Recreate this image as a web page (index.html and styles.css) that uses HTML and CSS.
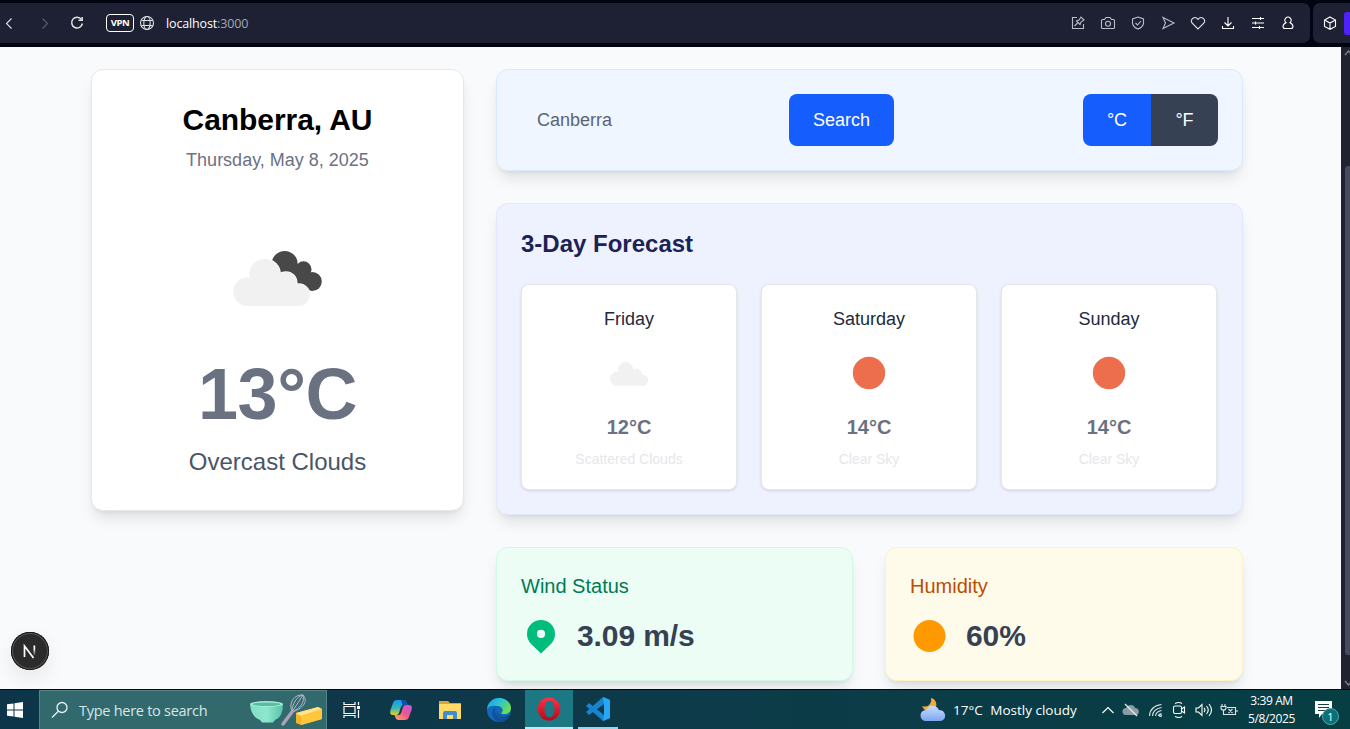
FILE: index.html
```html
<!DOCTYPE html>
<html lang="en">
<head>
<meta charset="utf-8">
<title>Weather</title>
<link rel="stylesheet" href="styles.css">
</head>
<body>
<div class="screen">
  <header class="browser">
    <div class="toolbar">
      <div class="nav">
        <svg width="16" height="16" class="stroke"><path d="M10.500 3.500 5.500 8.500l5 5"/></svg>
        <svg width="16" height="16" class="stroke dim"><path d="M5.500 3.500 10.500 8.500l-5 5"/></svg>
        <svg width="16" height="16" class="stroke reload"><path d="M12.500 4.500A5.400 5.400 0 1 0 13.400 8.500"/><path d="M13.200 2v3.200H9.500"/></svg>
      </div>
      <span class="vpn">VPN</span>
      <svg width="16" height="16" class="stroke globe"><circle cx="8" cy="8" r="6.500"/><ellipse cx="8" cy="8" rx="3.200" ry="6.500"/><path d="M2.500 5.500h11M2.500 10.500h11"/></svg>
      <span class="url"><b>localhost</b>:3000</span>
      <div class="tools">
        <svg width="16" height="16" class="stroke soft"><path d="M7 2.500H2.500v11h11V9M4.500 11l3-3M6.500 6l3.500 3.500 1-2.500 3-2-3-3-2 3z"/></svg>
        <svg width="16" height="16" class="stroke soft"><path d="M2.500 4.500h2l1.500-2h4l1.500 2h2q1 0 1 1v7q0 1-1 1h-11q-1 0-1-1v-7q0-1 1-1z"/><circle cx="8" cy="8.700" r="2.500"/></svg>
        <svg width="16" height="16" class="stroke soft"><path d="M8 2 13.500 4v4.500Q12.500 12.500 8 14 3.500 12.500 2.500 8.500V4zM5.500 8l2 2 3.500-4"/></svg>
        <svg width="16" height="16" class="stroke soft"><path d="M3 2.500 14 8 3 13.500 5.500 8z"/></svg>
        <svg width="16" height="16" class="stroke"><path d="M8 14 2 8C-.2 4 4.800 .400 8 4.300 11.200 .400 16.200 4 14 8z"/></svg>
        <svg width="16" height="16" class="stroke bright"><path d="M8 2v8.500M4.500 7.500 8 11l3.500-3.500M2.500 11v2.500h11V11"/></svg>
        <svg width="16" height="16" class="stroke bright"><path d="M2 3.500h12M2 8h12M2 12.500h12M10.500 2v3M5.500 6.500v3M9.500 11v3"/></svg>
        <svg width="16" height="16" class="stroke bright"><path d="M6 7.700a3.200 3.200 0 1 1 4 0Q13 9 13 11.500q0 2-2 2H5q-2 0-2-2Q3 9 6 7.700z"/></svg>
      </div>
    </div>
    <div class="side-tools">
      <svg width="16" height="16" class="stroke bright"><path d="M8 2 13.500 5v6.500L8 14.300 2.500 11.500V5zM2.500 5 8 8l5.500-3M8 8v6"/></svg>
      <i class="accent"></i>
    </div>
  </header>

  <div class="viewport">
    <main class="page">
      <section class="card current">
        <h1 class="city">Canberra, AU</h1>
        <p class="date">Thursday, May 8, 2025</p>
        <svg class="current-icon" width="100" height="64" viewBox="0 0 100 64">
          <defs><g id="cloud"><circle cx="19.500" cy="44.800" r="14.200"/><circle cx="36.700" cy="27.500" r="15.500"/><circle cx="58" cy="35.700" r="10.700"/><circle cx="70.700" cy="48" r="11"/><path d="M19.500 35 36 30 58 32 70.700 45V59H19.500z"/></g></defs>
          <g fill="#484848"><circle cx="56.700" cy="17" r="13"/><circle cx="75.500" cy="22.300" r="8"/><circle cx="84.300" cy="34.500" r="9.500"/><path d="M56 30 68 16 80 28 84 44 64 34z"/></g>
          <use href="#cloud" class="cloud-gap"/>
          <use href="#cloud" class="cloud"/>
        </svg>
        <p class="temp">13°C</p>
        <p class="summary">Overcast Clouds</p>
      </section>

      <div class="details">
        <section class="card search">
          <span class="query">Canberra</span>
          <button class="search-button">Search</button>
          <div class="units"><button class="unit active">°C</button><button class="unit">°F</button></div>
        </section>

        <section class="card forecast">
          <h2 class="forecast-title">3-Day Forecast</h2>
          <div class="days">
            <article class="day">
              <h3>Friday</h3>
              <svg width="50" height="50"><use href="#cloud" class="cloud" transform="translate(3.400 8.300) scale(.5)"/></svg>
              <strong>12°C</strong><p>Scattered Clouds</p>
            </article>
            <article class="day">
              <h3>Saturday</h3>
              <svg width="50" height="50"><circle class="sun" cx="25" cy="25" r="16.200"/></svg>
              <strong>14°C</strong><p>Clear Sky</p>
            </article>
            <article class="day">
              <h3>Sunday</h3>
              <svg width="50" height="50"><circle class="sun" cx="25" cy="25" r="16.200"/></svg>
              <strong>14°C</strong><p>Clear Sky</p>
            </article>
          </div>
        </section>

        <div class="stats">
          <section class="card stat wind">
            <h3>Wind Status</h3>
            <div class="reading"><svg width="40" height="40" viewBox="0 0 40 40"><path fill="#00bc7d" fill-rule="evenodd" d="M10.100 27.900a14 14 0 1 1 19.800 0L20 37.500zM20 22a4.100 4.100 0 1 0 0-8.200A4.100 4.100 0 0 0 20 22z"/></svg><strong>3.09 m/s</strong></div>
          </section>
          <section class="card stat humidity">
            <h3>Humidity</h3>
            <div class="reading"><svg width="40" height="40"><circle cx="19.500" cy="20" r="16" fill="#fe9a00"/></svg><strong>60%</strong></div>
          </section>
        </div>
      </div>
    </main>
    <div class="scrollbar"><svg width="9" height="12"><path d="M4 8 7.500 4 11 8" class="arrow"/></svg><i></i><svg width="9" height="12"><path d="M4 4 7.500 8 11 4" class="arrow"/></svg></div>
    <div class="dev-badge"><svg width="38" height="38"><defs><linearGradient id="fade" x1="0" y1="0" x2="0" y2="1"><stop offset=".3" stop-color="#fff"/><stop offset="1" stop-color="#fff" stop-opacity="0"/></linearGradient></defs><path d="M13.500 25V14l9 12" fill="none" stroke="#fff" stroke-width="1.700"/><rect x="22.500" y="13.500" width="1.700" height="10.500" fill="url(#fade)"/></svg></div>
  </div>

  <footer class="taskbar">
    <div class="start"><svg width="16" height="16"><path fill="#fff" d="M0 2.300 6.500 1.400V7.500H0zM7.500 1.200 16 0V7.500H7.500zM0 8.500H6.500V14.600L0 13.700zM7.500 8.500H16V16L7.500 14.800z"/></svg></div>
    <div class="task-search">
      <svg width="18" height="18"><g fill="none" stroke="#e8f2f2" stroke-width="1.300"><circle cx="11" cy="6.500" r="5"/><path d="M7.300 10.200 1 16.500"/></g></svg>
      <span>Type here to search</span>
      <svg class="baking" width="74" height="36" viewBox="0 0 74 36">
        <defs><linearGradient id="mint" x1="0" x2="1"><stop stop-color="#82dec4"/><stop offset=".5" stop-color="#8ce8cd"/><stop offset="1" stop-color="#5bc3a8"/></linearGradient></defs>
        <path fill="url(#mint)" d="M1 12Q2 25 11 28l2 2.500h11l2-2.500q8-3 8-16z"/><ellipse cx="17.500" cy="12" rx="16.500" ry="3" fill="#a5eed9"/><ellipse cx="17.500" cy="12.300" rx="14" ry="1.800" fill="#58bda3"/>
        <g fill="none" stroke="#b9b4c8" stroke-width="1"><path d="M43 20C39 10 46 2 54 3 60 10 53 17 43 20zM43 20C43 12 48 4 54 3M43 20C51 16 56 11 54 3M43 20 54 3"/></g><path d="M43 20 34 32" stroke="#aaa1ba" stroke-width="3.500" stroke-linecap="round"/>
        <path d="M47 21 69 15 73 17V27L52 33 47 31z" fill="#f4b52c"/><path d="M47 21 69 15 73 17 52 24z" fill="#ffe28a"/><path d="M52 24 73 17V27L52 33z" fill="#ffc83b"/>
      </svg>
    </div>
    <div class="app"><svg width="18" height="18"><path fill="none" stroke="#fff" stroke-width="1.200" d="M1 1v2.500h11V1M1 5.500h11v7H1zM1 17v-2.500h11V17M15.500 1v3M15.500 9v8"/><path fill="#fff" d="M14 5h3v3h-3z"/></svg></div>
    <div class="app"><svg width="24" height="24" viewBox="0 0 24 24"><defs><linearGradient id="cool" x1="0" y1="0" x2="0" y2="1"><stop stop-color="#1799ee"/><stop offset=".55" stop-color="#35b9b4"/><stop offset="1" stop-color="#f1cc23"/></linearGradient><linearGradient id="warm" x1="1" y1="0" x2="0" y2="1"><stop stop-color="#b65ce0"/><stop offset=".5" stop-color="#f0568b"/><stop offset="1" stop-color="#ffae61"/></linearGradient></defs><path fill="url(#cool)" d="M8 2h7q2 0 2.800 3l.7 2h-4q-2 0-2.600 2L10 15q-.7 2-3 2H4Q0 17 1.500 12L4 5Q5 2 8 2z"/><path fill="#174ab0" d="M12 2h3q2 0 2.800 3l.7 2h-5z"/><path fill="url(#warm)" d="M16 22H9q-2 0-2.800-3l-.7-2h4q2 0 2.600-2L14 9q.7-2 3-2h3q4 0 2.500 5L20 19q-1 3-4 3z"/></svg></div>
    <div class="app"><svg width="22" height="20"><path fill="#e0a42c" d="M0 1h9l2 2h11v4H0z"/><path fill="#ffda69" d="M0 4h22v15H0z"/><path fill="#3e8ed0" d="M4 19v-6q0-2 2-2h10q2 0 2 2v6h-4v-4H8v4z"/></svg></div>
    <div class="app"><svg width="24" height="24"><defs><linearGradient id="wave" x1="0" y1="0" x2="1" y2=".5"><stop stop-color="#2198e6"/><stop offset=".5" stop-color="#2bc1d6"/><stop offset="1" stop-color="#68df55"/></linearGradient></defs><circle cx="12" cy="12" r="12" fill="#1269b9"/><path fill="url(#wave)" d="M0 11C1 4 6 0 12 0c7 0 12 5 12 10 0 4-3 6-7 6-3 0-3-1-2-2 2-3-1-6-5-6-4-1-8 0-10 3z"/><path fill="#0d52a0" d="M9 9c-3 5 1 11 7 11 3 0 5-1 6-2-2 4-6 6-10 6C5 23 3 12 9 9z"/><path fill="#113c64" d="M10 11c-1 4 3 8 8 8l4-2-1 2c-5 2-13-1-11-8z"/></svg></div>
    <div class="app opera"><svg width="24" height="24"><defs><linearGradient id="red" x1="0" y1="0" x2="0" y2="1"><stop stop-color="#ff3048"/><stop offset="1" stop-color="#b30b1c"/></linearGradient></defs><path fill="url(#red)" fill-rule="evenodd" d="M12 .5a11.300 11.500 0 1 0 0 23 11.300 11.500 0 1 0 0-23zM12.500 3.500c3 0 5 4 5 8.500s-2 8.500-5 8.500S7.500 16.500 7.500 12s2-8.500 5-8.500z"/></svg></div>
    <div class="app code"><svg width="24" height="24"><path fill="#1684ce" d="M17 0 24 3V21L17 24 0 9 3 6 18 18V7L3 18 0 15z"/><path fill="#2aa6f2" d="M17 0 24 3V21L17 24l1-6V7z"/></svg></div>
    <div class="tray">
      <svg width="26" height="26" viewBox="0 0 26 26"><defs><linearGradient id="sky" x1="0" y1="0" x2="0" y2="1"><stop stop-color="#c9ddff"/><stop offset="1" stop-color="#7ca7f2"/></linearGradient></defs><path fill="#f3a83b" d="M11 1c5 1 7 7 4 11-4 4-11 3-13-3C8 11 12 7 11 1z"/><path fill="url(#sky)" d="M6 24a5.500 5.500 0 0 1 0-11c2-5 10-6 13 0 8 0 8 11 1 11z"/></svg>
      <span class="weather">17°C <span>Mostly cloudy</span></span>
      <div class="tray-icons">
        <svg width="14" height="16" class="stroke bright"><path d="M1.500 11 7 5.500l5.500 5.500"/></svg>
        <svg width="18" height="16"><path fill="#8b9ca5" d="M4 13a3.500 3.500 0 0 1 0-7c2-4 8-4 9 0 5 0 5 7 1 7z"/><path d="M3 2 15 14" stroke="#e8eef0" stroke-width="1.300"/></svg>
        <svg width="16" height="16" class="stroke"><path d="M1.500 14Q2 4 13.500 2.500M4.500 14Q5 7 13.500 5.500M7.500 14Q8 9.500 13.500 8.500M10.500 14q0-2 3-2.500"/><circle cx="12.500" cy="13.500" r="1"/></svg>
        <svg width="16" height="18" class="stroke bright"><rect x="2.500" y="5" width="8" height="7.500" rx="1.500"/><path d="m10.500 8 3-2v6l-3-2M4 2.500Q8 .500 11 2.500M4 15.500Q8 17.500 11 15.500"/></svg>
        <svg width="18" height="16" class="stroke bright"><path d="M1 6h2.500L7 2.500v11L3.500 10H1zM9 6q2 2 0 4M11.500 4q3.500 4 0 8M14 2q5 6 0 12"/></svg>
        <svg width="18" height="16" class="stroke soft-white"><path d="M2 2v2M5 2v2M1 4.500h5V6Q6 8 3.500 8 1 8 1 6zM3.500 8v4.500H15.500v-7H7M8.500 7l4 4M12.500 7l-4 4M17 8v2"/></svg>
      </div>
      <div class="clock"><span>3:39 AM</span><span>5/8/2025</span></div>
      <div class="notice"><svg width="17" height="17"><path fill="#fff" d="M0 0h17v13H7l-3 4v-4H0z"/><path stroke="#173e4b" d="M3 3.500h11M3 6.500h11M3 9.500h7"/></svg><b>1</b></div>
    </div>
  </footer>
</div>
</body>
</html>
```
FILE: styles.css
```css
* { box-sizing: border-box; }
body { margin: 0; font-family: "Liberation Sans", Arial, sans-serif; }
h1, h2, h3, p { margin: 0; }
h3 { font-weight: 400; }
button { border: 0; font: inherit; padding: 0; }
svg { display: block; flex: none; }
.screen { width: 1350px; height: 729px; display: flex; flex-direction: column; overflow: hidden; }

.stroke { fill: none; stroke: #dfe1e8; stroke-width: 1.1; }
.dim { stroke: #5b5e6c; }
.soft { stroke: #b9bcc8; }
.bright { stroke: #fff; }
.soft-white { stroke: #dde5e8; }
.browser { height: 47px; flex: none; background: #020412; padding: 3px 0 4px; display: flex; gap: 3px; font-family: "Open Sans", "Noto Sans", sans-serif; }
.toolbar { width: 1310px; background: #1e2133; border-radius: 0 7px 7px 0; display: flex; align-items: center; padding: 0 14px 0 1px; }
.nav { display: flex; gap: 20px; width: 105px; }
.nav .reload { margin-left: -4px; }
.reload { stroke-width: 1.5; }
.vpn { width: 28px; height: 18px; border: 1.5px solid #fff; border-radius: 4px; color: #fff; font-size: 9.5px; font-weight: 700; line-height: 16px; text-align: center; letter-spacing: -.5px; }
.globe { margin-left: 5px; }
.url { margin-left: 11px; color: #a3a7b6; font-size: 12.5px; letter-spacing: -.15px; }
.url b { font-weight: 400; color: #fff; }
.tools { margin-left: auto; display: flex; gap: 14px; }
.side-tools { flex: 1; background: #1e2133; border-radius: 7px 0 0 7px; display: flex; align-items: center; padding-left: 9px; gap: 6px; }
.accent { width: 6px; height: 23px; background: #4d22ff; border-radius: 3px 0 0 3px; }

.viewport { height: 642px; flex: none; background: #f9fafb; display: flex; position: relative; overflow: hidden; }
.page { width: 1341px; padding: 22px 98px 0 91px; display: flex; gap: 32px; align-items: flex-start; }
.card { border: 1px solid #e5e7eb; border-radius: 12px; box-shadow: 0 10px 15px -3px rgba(0,0,0,.1), 0 4px 6px -4px rgba(0,0,0,.1); }
.current { width: 373px; height: 442px; flex: none; background: #fff; display: flex; flex-direction: column; align-items: center; padding-top: 32px; }
.city { font-size: 30px; line-height: 36px; font-weight: 700; letter-spacing: -.07px; }
.date { margin-top: 8px; font-size: 18px; line-height: 28px; color: #6a7282; }
.current-icon { margin-top: 73px; }
.cloud { fill: #f1f1f1; }
.cloud-gap { fill: #fff; stroke: #fff; stroke-width: 1.6; }
.sun { fill: #ec6e4c; }
.temp { margin-top: 47px; font-size: 72px; line-height: 72px; font-weight: 700; color: #6a7282; letter-spacing: -.5px; }
.summary { margin-top: 16px; font-size: 24px; line-height: 32px; color: #4a5565; }

.details { width: 747px; flex: none; display: flex; flex-direction: column; gap: 32px; }
.search { height: 102px; padding: 24px; background: #eff6ff; border-color: #dbeafe; display: flex; align-items: center; font-size: 18px; }
.query { width: 268px; padding-left: 16px; color: #5b6472; }
.search-button { width: 105px; height: 52px; border-radius: 8px; background: #155dfc; color: #fff; }
.units { margin-left: auto; display: flex; border-radius: 8px; overflow: hidden; }
.unit { width: 67px; height: 52px; background: #364153; color: #fff; }
.unit.active { width: 68px; background: #155dfc; }
.forecast { height: 312px; padding: 24px; background: #eef2ff; border-color: #e0e7ff; }
.forecast-title { font-size: 24px; line-height: 32px; color: #1c2253; }
.days { margin-top: 24px; display: grid; grid-template-columns: repeat(3, 216px); gap: 24px; }
.day { height: 206px; background: #fff; border: 1px solid #e5e7eb; border-radius: 8px; box-shadow: 0 1px 3px rgba(0,0,0,.12); display: flex; flex-direction: column; align-items: center; padding-top: 20px; }
.day h3 { font-size: 18px; line-height: 28px; color: #1e2939; }
.day svg { margin-top: 15px; }
.day strong { margin-top: 15px; font-size: 20px; line-height: 28px; color: #6a7282; }
.day p { margin-top: 8px; font-size: 14px; line-height: 20px; color: #e5e7eb; }
.stats { display: grid; grid-template-columns: 357px 358px; gap: 32px; }
.stat { height: 134px; padding: 24px; }
.stat h3 { font-size: 20px; line-height: 28px; }
.wind { background: #ecfdf5; border-color: #d0fae5; }
.wind h3 { color: #007a55; }
.humidity { background: #fffbeb; border-color: #fef3c6; }
.humidity h3 { color: #bb4d00; }
.reading { margin-top: 16px; display: flex; align-items: center; gap: 16px; height: 40px; }
.reading strong { font-size: 30px; line-height: 36px; color: #364153; letter-spacing: -.1px; }
.scrollbar { width: 9px; background: #20222f; display: flex; flex-direction: column; overflow: hidden; }
.scrollbar i { margin: 107px 0 auto 4px; width: 8px; height: 489px; background: #474a5c; border-radius: 3px; }
.arrow { fill: none; stroke: #777985; stroke-width: 1.5; }
.dev-badge { position: absolute; left: 11px; top: 585px; width: 38px; height: 38px; border-radius: 50%; background: #2b2b2b; box-shadow: inset 0 0 0 1px #151515, inset 0 0 0 2px #555, 0 8px 20px rgba(0,0,0,.08); }

.taskbar { height: 40px; flex: none; border-top: 1px solid #020810; background: linear-gradient(90deg, #0d3549, #0d3b49 55%, #063e43); display: flex; color: #fff; font-family: "Open Sans", "Noto Sans", sans-serif; }
.start { width: 39px; display: flex; align-items: center; padding-left: 7px; }
.task-search { width: 288px; background: #32696d; border: 1px solid #568589; border-bottom: 0; display: flex; align-items: center; padding: 0 3px 0 11px; color: #d7e6e8; font-size: 14.5px; }
.task-search span { margin-left: 10px; letter-spacing: -.27px; }
.baking { margin-left: auto; }
.app { width: 49px; display: flex; align-items: center; justify-content: center; }
.opera { width: 48px; margin-left: 2px; background: #1c7883; border-bottom: 2px solid #b8edf7; }
.code { width: 40px; margin-left: 5px; border-bottom: 2px solid #91d7f3; }
.tray { margin-left: auto; display: flex; align-items: center; width: 430px; }
.weather { margin-left: 7px; width: 148px; font-size: 13.5px; white-space: nowrap; }
.weather span { margin-left: 4px; }
.tray-icons { display: flex; align-items: center; justify-content: space-between; width: 137px; }
.clock { margin-left: 8px; width: 51px; display: flex; flex-direction: column; align-items: center; font-size: 12px; line-height: 18px; letter-spacing: -.4px; white-space: nowrap; }
.notice { position: relative; margin-left: 18px; width: 24px; height: 18px; }
.notice b { position: absolute; left: 7px; top: 7px; width: 17px; height: 17px; border: 1px solid #5da5a9; border-radius: 50%; background: #087078; font-size: 11px; line-height: 15px; font-weight: 400; text-align: center; }
```
